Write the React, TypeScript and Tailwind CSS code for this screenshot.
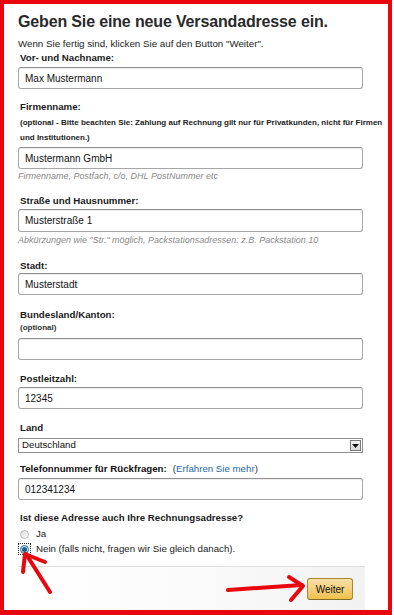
import React from "react";

const inputCls =
  "w-[345px] border border-[#a6a6a6] border-t-[#8f8f8f] rounded-[3px] bg-white shadow-[inset_0_1px_0_rgba(0,0,0,0.07)] flex items-center pl-[6px] text-[10px] text-[#111]";

function Label({ children, cls = "" }: { children: React.ReactNode; cls?: string }) {
  return <div className={"ml-[2px] text-[9.7px] leading-[14px] font-bold text-[#1a1a1a] " + cls}>{children}</div>;
}

export default function App() {
  return (
    <div className="relative w-[394px] h-[615px] bg-white" style={{ fontFamily: '"Liberation Sans", Arial, sans-serif' }}>
      <div className="w-[392px] h-[615px] border-4 border-b-[5px] border-[#e8070d] bg-white pl-[14px] pt-[8px]">
        <h1 className="text-[16px] leading-[20px] font-bold text-[#2a2a2a] tracking-[-0.15px]">
          Geben Sie eine neue Versandadresse ein.
        </h1>
        <p className="mt-[5px] text-[9.75px] leading-[14px] text-[#222]">
          Wenn Sie fertig sind, klicken Sie auf den Button "Weiter".
        </p>
        <Label>Vor- und Nachname:</Label>
        <div className={inputCls + " mt-[2px] h-[22px]"}>Max Mustermann</div>

        <Label cls="mt-[11px]">Firmenname:</Label>
        <div className="ml-[2px] mt-[1px] text-[8px] leading-[15px] font-bold text-[#222]">
          (optional - Bitte beachten Sie: Zahlung auf Rechnung gilt nur für Privatkunden, nicht für Firmen
          <br />
          und Institutionen.)
        </div>
        <div className={inputCls + " mt-[2px] h-[22px]"}>Mustermann GmbH</div>
        <div className="text-[9px] leading-[14px] italic text-[#8a8a8a]">
          Firmenname, Postfach, c/o, DHL PostNummer etc
        </div>

        <Label cls="mt-[11px]">Straße und Hausnummer:</Label>
        <div className={inputCls + " mt-[1px] h-[23px]"}>Musterstraße 1</div>
        <div className="mt-[1px] text-[9px] leading-[14px] italic text-[#8a8a8a]">
          Abkürzungen wie "Str." möglich, Packstationsadressen: z.B. Packstation 10
        </div>

        <Label cls="mt-[12px]">Stadt:</Label>
        <div className={inputCls + " h-[22px]"}>Musterstadt</div>

        <Label cls="mt-[13px]">Bundesland/Kanton:</Label>
        <div className="ml-[2px] text-[8px] leading-[12px] font-bold text-[#333]">(optional)</div>
        <div className={inputCls + " mt-[4px] h-[22px]"}></div>

        <Label cls="mt-[12px]">Postleitzahl:</Label>
        <div className={inputCls + " mt-[1px] h-[22px]"}>12345</div>

        <Label cls="mt-[12px]">Land</Label>
        <div className="mt-[3px] w-[345px] h-[15px] border border-[#8e8e8e] bg-white flex items-center justify-between pl-[3px] pr-[1px] text-[9.7px] text-[#111]">
          <span>Deutschland</span>
          <span className="w-[11px] h-[11px] border border-[#7a7a7a] bg-gradient-to-b from-[#f4f4f4] to-[#d9d9d9] flex items-center justify-center">
            <svg width="7" height="4" viewBox="0 0 7 4">
              <path d="M0 0 H7 L3.5 4 Z" fill="#111" />
            </svg>
          </span>
        </div>

        <div className="mt-[9px] ml-[2px] text-[9.7px] leading-[14px] text-[#111]">
          <span className="font-bold">Telefonnummer für Rückfragen:</span>
          <span className="ml-[6px] text-[#333]">
            (<span className="text-[#1f68a8]">Erfahren Sie mehr</span>)
          </span>
        </div>
        <div className={inputCls + " mt-[2px] h-[22px]"}>012341234</div>

        <Label cls="mt-[11px]">Ist diese Adresse auch Ihre Rechnungsadresse?</Label>
        <div className="mt-[2px] flex items-center h-[14px] text-[9.7px] text-[#222]">
          <span className="w-[13px] flex justify-center">
            <span className="w-[9px] h-[9px] rounded-full border border-[#b8b8b8] bg-gradient-to-br from-[#dcdcdc] to-white" />
          </span>
          <span className="ml-[5px]">Ja</span>
        </div>
        <div className="mt-[1px] flex items-center h-[14px] text-[9.7px] text-[#222]">
          <span className="w-[13px] h-[12px] border border-dotted border-[#222] flex items-center justify-center">
            <span className="w-[9px] h-[9px] rounded-full border border-[#3d6f96] bg-[#cfe4f2] flex items-center justify-center">
              <span className="w-[5px] h-[5px] rounded-full bg-[#1b5f8f]" />
            </span>
          </span>
          <span className="ml-[5px]">Nein (falls nicht, fragen wir Sie gleich danach).</span>
        </div>

        <div className="mt-[10px] w-[347px] h-[44px] border-t border-[#dedede] bg-gradient-to-r from-white via-[#fbfbfb] to-[#f2f2f2] flex justify-end pt-[11px] pr-[12px]">
          <div className="w-[46px] h-[22px] rounded-[3px] border border-[#a88734] border-b-[#846a29] bg-gradient-to-b from-[#f7dfa5] to-[#f0c14b] flex items-center justify-center text-[10px] text-[#111]">
            Weiter
          </div>
        </div>
      </div>

      <svg className="absolute inset-0 pointer-events-none" width="394" height="615" viewBox="0 0 394 615">
        <g stroke="#e8070d" strokeWidth="4" strokeLinecap="round" strokeLinejoin="round" fill="none">
          <path d="M50 592 L26 554" />
          <path d="M23 572 L25 554 L45 562" />
          <path d="M228 590 L302 585" />
          <path d="M289 577 L303 586 L291 600" />
        </g>
      </svg>
    </div>
  );
}
